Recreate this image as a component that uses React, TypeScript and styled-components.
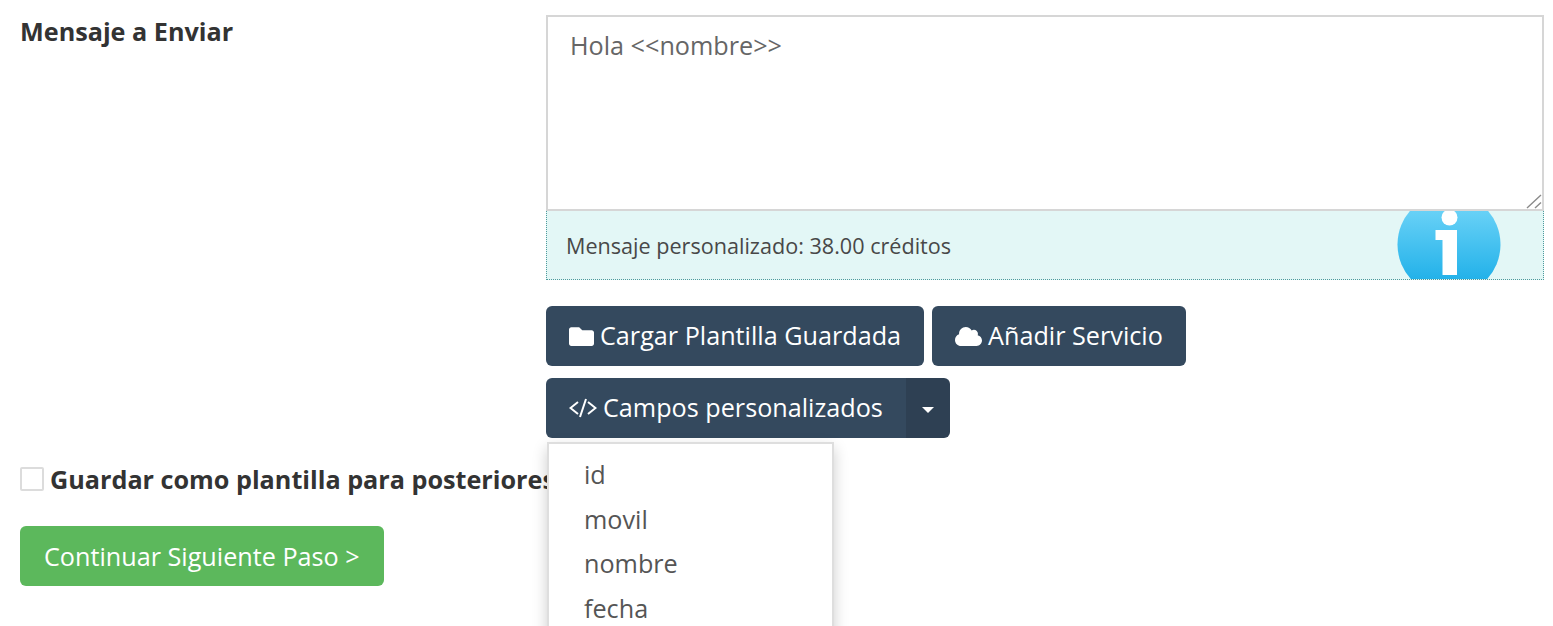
import React from "react";
import styled, { createGlobalStyle } from "styled-components";
import { FaFolder, FaCloud } from "react-icons/fa";

const Global = createGlobalStyle`
  html, body { margin: 0; padding: 0; background: #fff; overflow: hidden; }
  body { font-family: "Open Sans", "Liberation Sans", sans-serif; color: #333; }
`;

const Page = styled.div`
  width: 1553px;
  height: 626px;
  overflow: hidden;
  padding: 15px 9px 0 20px;
  box-sizing: border-box;
`;

const FormRow = styled.div`
  display: grid;
  grid-template-columns: 526px 998px;
`;

const FieldLabel = styled.label`
  font-size: 25.2px;
  line-height: 32px;
  font-weight: 700;
  color: #333;
`;

const Field = styled.div`
  display: flex;
  flex-direction: column;
  min-width: 0;
`;

const BoxWrap = styled.div`
  position: relative;
  height: 196px;
`;

const MessageBox = styled.textarea`
  display: block;
  width: 100%;
  height: 196px;
  box-sizing: border-box;
  margin: 0;
  padding: 11px 22px;
  border: 2px solid #d6d6d6;
  border-radius: 0;
  background: #fff;
  font: 400 25.2px/34px "Open Sans", sans-serif;
  color: #666;
  outline: none;
  resize: none;
`;

const ResizeGrip = styled.svg`
  position: absolute;
  right: 2px;
  bottom: 2px;
  width: 16px;
  height: 16px;
`;

const Notice = styled.div`
  display: flex;
  align-items: center;
  justify-content: space-between;
  height: 68px;
  padding: 0 42px 0 19px;
  background: #e3f7f6;
  border: 1px dotted #4f9a9c;
  border-top: none;
  font-size: 21.6px;
  color: #484848;
`;

const InfoIcon = styled.svg`
  display: block;
  width: 104px;
  height: 68px;
  flex: none;
`;

const ButtonRow = styled.div`
  display: flex;
  gap: 8px;
  margin-top: 26px;
`;

const Button = styled.button`
  display: inline-flex;
  align-items: center;
  gap: 6px;
  height: 60px;
  padding: 0 23px;
  border: none;
  border-radius: 6px;
  background: #34495e;
  color: #fff;
  font: 400 25.2px/1 "Open Sans", sans-serif;
  white-space: nowrap;
  svg { flex: none; }
`;

const SplitGroup = styled.div`
  position: relative;
  display: inline-flex;
  align-self: flex-start;
  margin-top: 12px;
`;

const SplitMain = styled(Button)`
  border-radius: 6px 0 0 6px;
`;

const SplitToggle = styled.button`
  display: flex;
  align-items: center;
  justify-content: center;
  width: 44px;
  height: 60px;
  padding: 0;
  border: none;
  border-radius: 0 6px 6px 0;
  background: #2e4053;
`;

const Caret = styled.span`
  width: 0;
  height: 0;
  margin-top: 4px;
  border-left: 6px solid transparent;
  border-right: 6px solid transparent;
  border-top: 6px solid #fff;
`;

const Menu = styled.ul`
  position: absolute;
  top: 64px;
  left: 1px;
  width: 287px;
  height: 300px;
  margin: 0;
  padding: 8px 0 0;
  box-sizing: border-box;
  list-style: none;
  background: #fff;
  border: 2px solid #dedede;
  border-bottom: none;
  box-shadow: 0 6px 14px rgba(0, 0, 0, 0.2);
  z-index: 2;
`;

const MenuItem = styled.li`
  padding-left: 35px;
  height: 44.7px;
  font-size: 25.2px;
  line-height: 44px;
  color: #555;
`;

const CheckRow = styled.label`
  display: flex;
  align-items: center;
  gap: 6px;
  height: 34px;
  margin-top: 24px;
  font-size: 25.2px;
  font-weight: 700;
  white-space: nowrap;
`;

const Check = styled.span`
  width: 24px;
  height: 24px;
  box-sizing: border-box;
  border: 2px solid #dcdcdc;
  border-radius: 2px;
  background: #fff;
`;

const ContinueButton = styled(Button)`
  display: block;
  margin-top: 30px;
  padding: 2px 24px 0;
  background: #5cb85c;
`;

export default function App() {
  return (
    <Page>
      <Global />
      <FormRow>
        <FieldLabel>Mensaje a Enviar</FieldLabel>
        <Field>
          <BoxWrap>
            <MessageBox defaultValue="Hola <<nombre>>" />
            <ResizeGrip viewBox="0 0 16 16" fill="none" stroke="#8a8a8a" strokeWidth="1.4" aria-hidden="true">
              <path d="M1 15 15 2M9 15l6-5.5" />
            </ResizeGrip>
          </BoxWrap>
          <Notice>
            <span>Mensaje personalizado: 38.00 créditos</span>
            <InfoIcon viewBox="0 0 104 68" aria-hidden="true">
              <defs>
                <linearGradient id="infoFill" x1="0" y1="0" x2="0" y2="1">
                  <stop offset="0" stopColor="#7ad9fa" />
                  <stop offset="1" stopColor="#12aae6" />
                </linearGradient>
              </defs>
              <circle cx="52" cy="33.5" r="51.5" fill="url(#infoFill)" />
              <circle cx="52.5" cy="6.5" r="8" fill="#fff" />
              <path d="M38.5 19H60v45H45.5V29h-7z" fill="#fff" />
            </InfoIcon>
          </Notice>
          <ButtonRow>
            <Button>
              <FaFolder size={25} />
              Cargar Plantilla Guardada
            </Button>
            <Button>
              <FaCloud size={27} />
              Añadir Servicio
            </Button>
          </ButtonRow>
          <SplitGroup>
            <SplitMain>
              <svg width="28" height="20" viewBox="0 0 28 20" fill="none" stroke="#fff" strokeWidth="2">
                <path d="M9 4 1.5 10 9 16M19 4l7.5 6-7.5 6M17 1l-6 18" />
              </svg>
              Campos personalizados
            </SplitMain>
            <SplitToggle>
              <Caret />
            </SplitToggle>
            <Menu>
              <MenuItem>id</MenuItem>
              <MenuItem>movil</MenuItem>
              <MenuItem>nombre</MenuItem>
              <MenuItem>fecha</MenuItem>
            </Menu>
          </SplitGroup>
        </Field>
      </FormRow>
      <CheckRow>
        <Check />
        Guardar como plantilla para posteriores
      </CheckRow>
      <ContinueButton>Continuar Siguiente Paso &gt;</ContinueButton>
    </Page>
  );
}
